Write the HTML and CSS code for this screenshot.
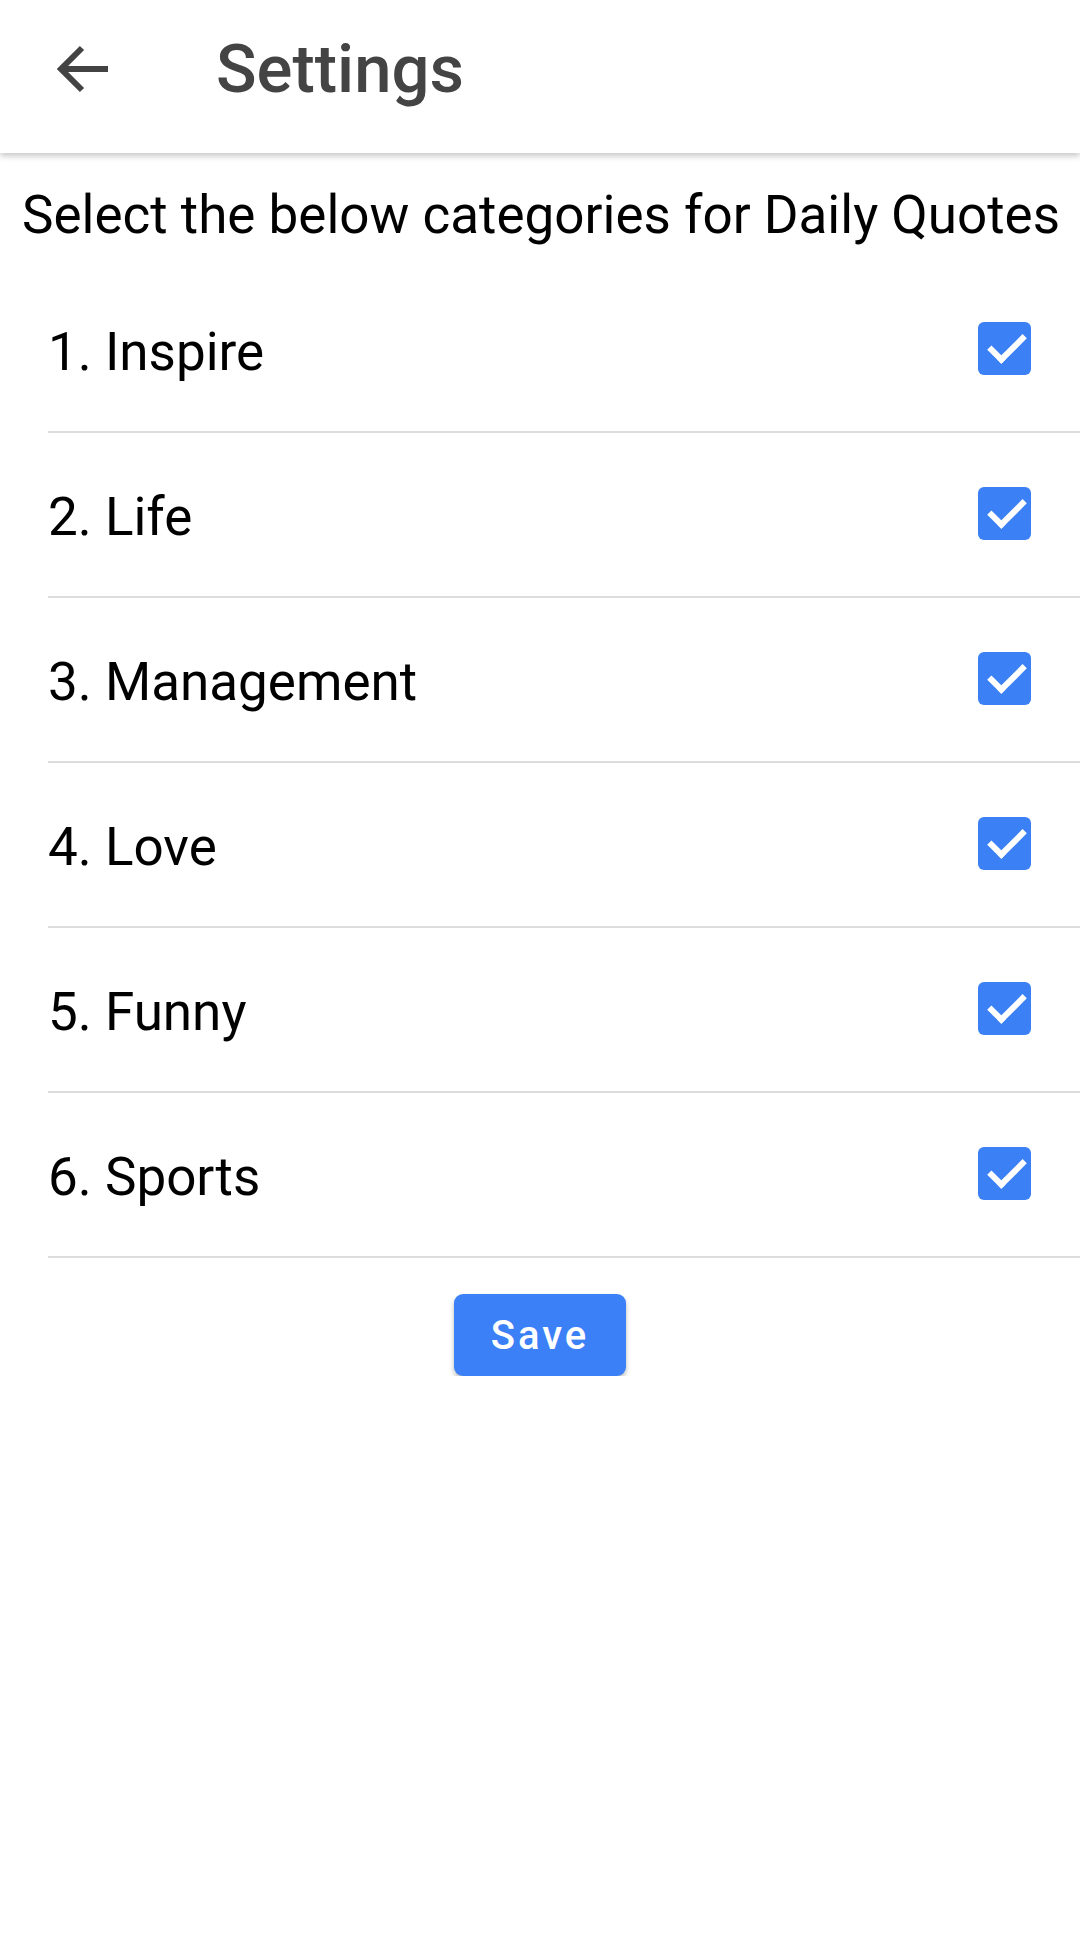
FILE: index.html
```html
<!DOCTYPE html>
<html>
<head>
<meta charset="utf-8">
<title>Settings</title>
<link rel="stylesheet" href="styles.css">
</head>
<body>

<div class="header">
  <div class="backbtn">
    <svg width="52" height="50" viewBox="0 0 52 50">
      <path d="M51 25 H6 M25 4 L4 25 L25 46" fill="none" stroke="#434343" stroke-width="6"/>
    </svg>
  </div>
  <div class="title">Settings</div>
</div>

<div class="intro">Select the below categories for Daily Quotes</div>

<div class="list">
  <div class="row"><span class="label">1. Inspire</span><span class="check"></span></div>
  <div class="row"><span class="label">2. Life</span><span class="check"></span></div>
  <div class="row"><span class="label">3. Management</span><span class="check"></span></div>
  <div class="row"><span class="label">4. Love</span><span class="check"></span></div>
  <div class="row"><span class="label">5. Funny</span><span class="check"></span></div>
  <div class="row"><span class="label">6. Sports</span><span class="check"></span></div>
</div>

<div class="actions">
  <button type="button" class="savebtn">Save</button>
</div>

</body>
</html>
```

FILE: styles.css
```css
body {
    margin: 0;
    background: #fff;
    font-family: Roboto, "Noto Sans", sans-serif;
    color: #000;
}

.header {
    height: 153px;
    display: flex;
    align-items: center;
    box-shadow: 0 3px 6px rgba(0, 0, 0, 0.22);
    position: relative;
}

.backbtn {
    width: 52px;
    height: 50px;
    margin-left: 57px;
    margin-top: -16px;
}

.backbtn svg {
    display: block;
}

.title {
    margin-left: 107px;
    margin-top: -16px;
    font-size: 67px;
    font-weight: 500;
    color: #444;
}

.intro {
    font-size: 53px;
    padding: 9px 0 0 22px;
    line-height: 106px;
}

.row {
    height: 163px;
    margin-left: 48px;
    border-bottom: 2px solid #dcdcdc;
    display: flex;
    align-items: center;
    justify-content: space-between;
}

.label {
    font-size: 53px;
    margin-top: 4px;
}

.check {
    width: 53px;
    height: 53px;
    border-radius: 6px;
    background: #3b80f5;
    margin-right: 49px;
    margin-top: -2px;
    position: relative;
}

.check::after {
    content: "";
    position: absolute;
    left: 11px;
    top: 12px;
    width: 30px;
    height: 14px;
    border-left: 6px solid #fff;
    border-bottom: 6px solid #fff;
    transform: rotate(-45deg);
    transform-origin: center;
}

.actions {
    display: flex;
    justify-content: center;
    padding-top: 36px;
}

.savebtn {
    width: 172px;
    height: 82px;
    background: #3b80f7;
    color: #fff;
    border: none;
    border-radius: 9px;
    font-family: Roboto, sans-serif;
    font-size: 40px;
    font-weight: 500;
    letter-spacing: 3px;
    box-shadow: 0 3px 5px rgba(0, 0, 0, 0.28);
    cursor: pointer;
}
```
